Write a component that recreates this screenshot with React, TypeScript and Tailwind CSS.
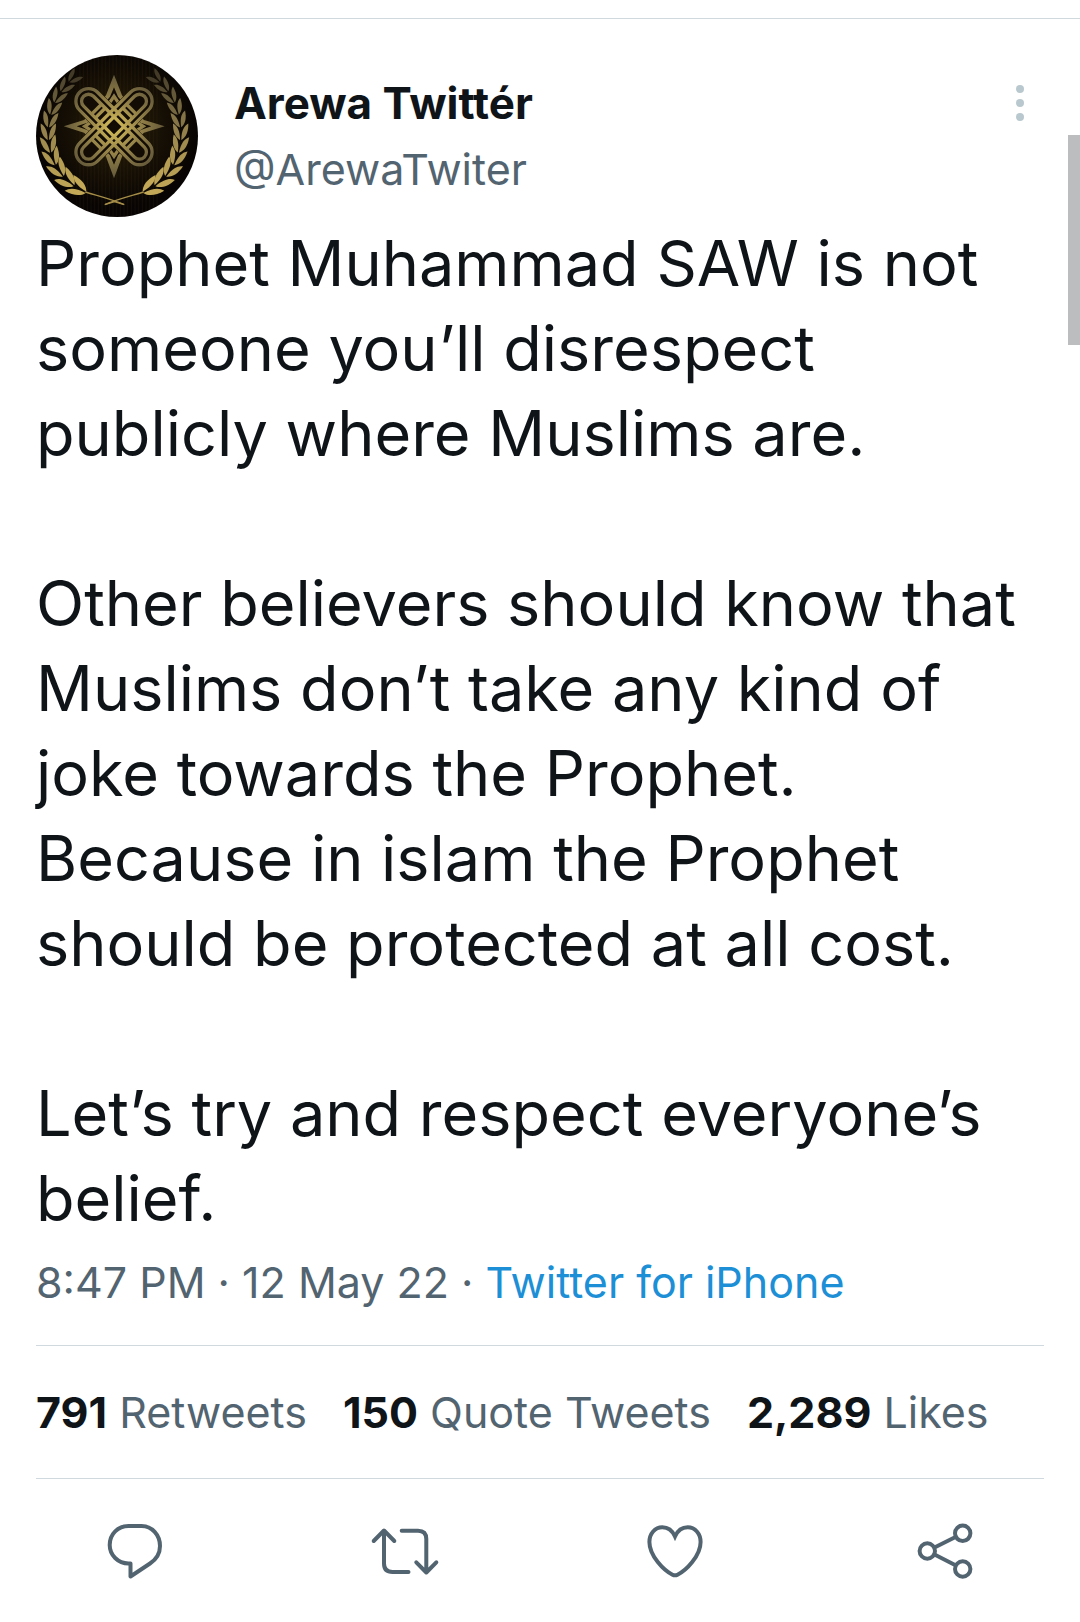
import type { ReactNode } from "react";

const paragraphs = [
  "Prophet Muhammad SAW is not someone you’ll disrespect publicly where Muslims are.",
  "Other believers should know that Muslims don’t take any kind of joke towards the Prophet. Because in islam the Prophet should be protected at all cost.",
  "Let’s try and respect everyone’s belief.",
];

const stats = [
  { count: "791", label: "Retweets" },
  { count: "150", label: "Quote Tweets" },
  { count: "2,289", label: "Likes" },
];

// Points along the stem of the left laurel branch, from its foot to its tip,
// each with the colour of the pair of leaves that grows there.
const nodes = [
  { x: 198, y: 457, color: "#c3a957" },
  { x: 162, y: 437, color: "#bca355" },
  { x: 130, y: 409, color: "#b59d54" },
  { x: 106, y: 375, color: "#ab9551" },
  { x: 92, y: 338, color: "#a08c4e" },
  { x: 85, y: 300, color: "#94814b" },
  { x: 85, y: 262, color: "#857546" },
  { x: 92, y: 224, color: "#746740" },
  { x: 104, y: 188, color: "#635838" },
  { x: 123, y: 155, color: "#524930" },
  { x: 147, y: 126, color: "#433b28" },
  { x: 174, y: 100, color: "#3a3322" },
];

function Branch() {
  return (
    <g>
      {nodes.slice(0, -1).map((node, i) => {
        const next = nodes[i + 1];
        const turn = (Math.atan2(next.y - node.y, next.x - node.x) * 180) / Math.PI;
        const size = 1 - i * 0.03;
        return (
          <g key={node.y} fill={node.color} transform={`translate(${node.x} ${node.y}) rotate(${turn}) scale(${size})`}>
            <path d="M0 2C8 18 28 28 58 27C50 12 34 3 0 2Z" />
            <path d="M0 -2C8 -18 28 -28 58 -27C50 -12 34 -3 0 -2Z" />
          </g>
        );
      })}
      <path d="M196 456C228 466 270 476 311 493M254 494L284 485" fill="none" stroke="#a58d48" strokeWidth="4" />
    </g>
  );
}

function Loop({ turn }: { turn: number }) {
  return (
    <g transform={`rotate(${turn} 282 260)`}>
      <rect x="136" y="222" width="292" height="76" rx="38" />
      <rect x="153" y="239" width="258" height="42" rx="21" />
      <path d="M208 239V281M224 239V281M340 239V281M356 239V281" />
    </g>
  );
}

function Avatar() {
  return (
    <svg viewBox="48 45 486 486" className="size-[162px] shrink-0 rounded-full" role="img" aria-label="Arewa Twittér">
      <defs>
        <radialGradient id="ground" gradientUnits="userSpaceOnUse" cx="290" cy="260" r="245">
          <stop offset="0" stopColor="#2b2208" />
          <stop offset="0.55" stopColor="#171005" />
          <stop offset="1" stopColor="#070403" />
        </radialGradient>
        <radialGradient id="gold" gradientUnits="userSpaceOnUse" cx="282" cy="260" r="155">
          <stop offset="0" stopColor="#dcc45c" />
          <stop offset="0.45" stopColor="#9a874a" />
          <stop offset="1" stopColor="#625739" />
        </radialGradient>
        <pattern id="grain" width="22" height="486" patternUnits="userSpaceOnUse">
          <path d="M4 0V486M15 0V486" stroke="#4a3810" strokeWidth="2" opacity="0.25" />
        </pattern>
      </defs>
      <rect x="48" y="45" width="486" height="486" fill="url(#ground)" />
      <rect x="170" y="45" width="250" height="486" fill="url(#grain)" />
      <path
        d="M282 104L306 166L336 205L372 240L434 259L372 278L336 312L306 350L282 415L258 350L228 312L192 278L131 259L192 240L228 205L258 166Z"
        fill="url(#gold)"
      />
      <path
        d="M282 142L294 170L330 212L362 248L394 259L362 270L330 306L294 346L282 374L270 346L234 306L202 270L170 259L202 248L234 212L270 170Z"
        fill="#120c04"
      />
      <path
        d="M262 190L282 160L302 190L282 208ZM262 328L282 358L302 328L282 310ZM215 240L185 259L215 278L235 259ZM349 240L379 259L349 278L329 259Z"
        fill="url(#gold)"
      />
      <path d="M272 192L282 178L292 192L282 200ZM272 326L282 340L292 326L282 318ZM217 250L203 259L217 268L225 259ZM347 250L361 259L347 268L339 259Z" fill="#120c04" />
      <g fill="#120c04">
        <rect x="130" y="216" width="304" height="88" rx="44" transform="rotate(45 282 260)" />
        <rect x="130" y="216" width="304" height="88" rx="44" transform="rotate(-45 282 260)" />
      </g>
      <g stroke="url(#gold)" strokeWidth="10" fill="none">
        <Loop turn={45} />
        <Loop turn={-45} />
      </g>
      <path d="M282 244L298 260L282 276L266 260Z" fill="#120c04" />
      <Branch />
      <g transform="translate(567 0) scale(-1 1)">
        <Branch />
      </g>
    </svg>
  );
}

function Icon({ children }: { children: ReactNode }) {
  return (
    <svg
      viewBox="0 0 72 72"
      className="size-18"
      fill="none"
      stroke="currentColor"
      strokeWidth="4"
      strokeLinecap="round"
      strokeLinejoin="round"
      aria-hidden="true"
    >
      {children}
    </svg>
  );
}

const actions = [
  {
    label: "Reply",
    icon: (
      <path d="M29.5 11H42.5C53 11 61 20 61 31C61 38 57 44.5 51 48.5L31.5 61.5V48.5H29.5C19 48.5 10.7 40 10.7 30C10.7 19 19 11 29.5 11Z" />
    ),
  },
  {
    label: "Retweet",
    icon: (
      <path d="M4.7 26L15 15.5L25.3 26M15 16V48.5Q15 57 23.5 57H39.5M32.7 15.7H49Q57.3 15.7 57.3 24V57M47.3 47.3L57.3 57.5L67.3 47.3" />
    ),
  },
  {
    label: "Like",
    icon: (
      <path
        strokeLinejoin="miter"
        d="M36 21.5C33.5 16 29 12.3 23.3 12.3C16 12.3 10.4 18.5 10.4 27C10.4 41 25 55.5 33.5 59.7Q36 61 38.5 59.7C47 55.5 61.6 41 61.6 27C61.6 18.5 56 12.3 48.7 12.3C43 12.3 38.5 16 36 21.5Z"
      />
    ),
  },
  {
    label: "Share",
    icon: (
      <>
        <circle cx="18.3" cy="36" r="7.7" />
        <circle cx="53.7" cy="18.3" r="7.7" />
        <circle cx="53.7" cy="54" r="7.7" />
        <path d="M25.5 32.5L46.5 22M25.5 39.5L46.5 50.3" />
      </>
    ),
  },
];

export default function App() {
  return (
    <div className="relative min-h-screen bg-white pt-[18px] pb-5 font-['Inter',sans-serif] text-[43px] leading-[66px] text-[#536471]">
      <div className="absolute top-[135px] right-0 h-[210px] w-3 bg-[#bcbdbf]" />
      <article className="border-t border-[#cfd9de]">
        <div className="px-9">
          <header className="flex gap-9 pt-9">
            <Avatar />
            <div className="min-w-0 flex-1 pt-[15px]">
              <h1 className="text-[44px] font-bold text-[#0f1419]">Arewa Twittér</h1>
              <p>@ArewaTwiter</p>
            </div>
            <button type="button" aria-label="More" className="flex h-24 w-12 flex-col items-center justify-center gap-1.5">
              <span className="size-2 rounded-full bg-[#b9c8ce]" />
              <span className="size-2 rounded-full bg-[#b9c8ce]" />
              <span className="size-2 rounded-full bg-[#b9c8ce]" />
            </button>
          </header>
          <div className="flex flex-col gap-[85px] pt-1 text-[63px] leading-[85px] text-[#0f1419]">
            {paragraphs.map((text) => (
              <p key={text}>{text}</p>
            ))}
          </div>
          <p className="border-b border-[#cfd9de] pt-2 pb-[30px]">
            <time>8:47 PM · 12 May 22</time> ·{" "}
            <a href="#source" className="text-[#1d8fd6]">
              Twitter for iPhone
            </a>
          </p>
          <div className="flex gap-9 border-b border-[#cfd9de] py-[33px]">
            {stats.map((s) => (
              <a key={s.label} href="#stats" className="whitespace-nowrap">
                <strong className="font-bold text-[#0f1419]">{s.count}</strong> {s.label}
              </a>
            ))}
          </div>
        </div>
        <div className="grid grid-cols-4 justify-items-center pt-9">
          {actions.map((a) => (
            <button key={a.label} type="button" aria-label={a.label}>
              <Icon>{a.icon}</Icon>
            </button>
          ))}
        </div>
      </article>
    </div>
  );
}
